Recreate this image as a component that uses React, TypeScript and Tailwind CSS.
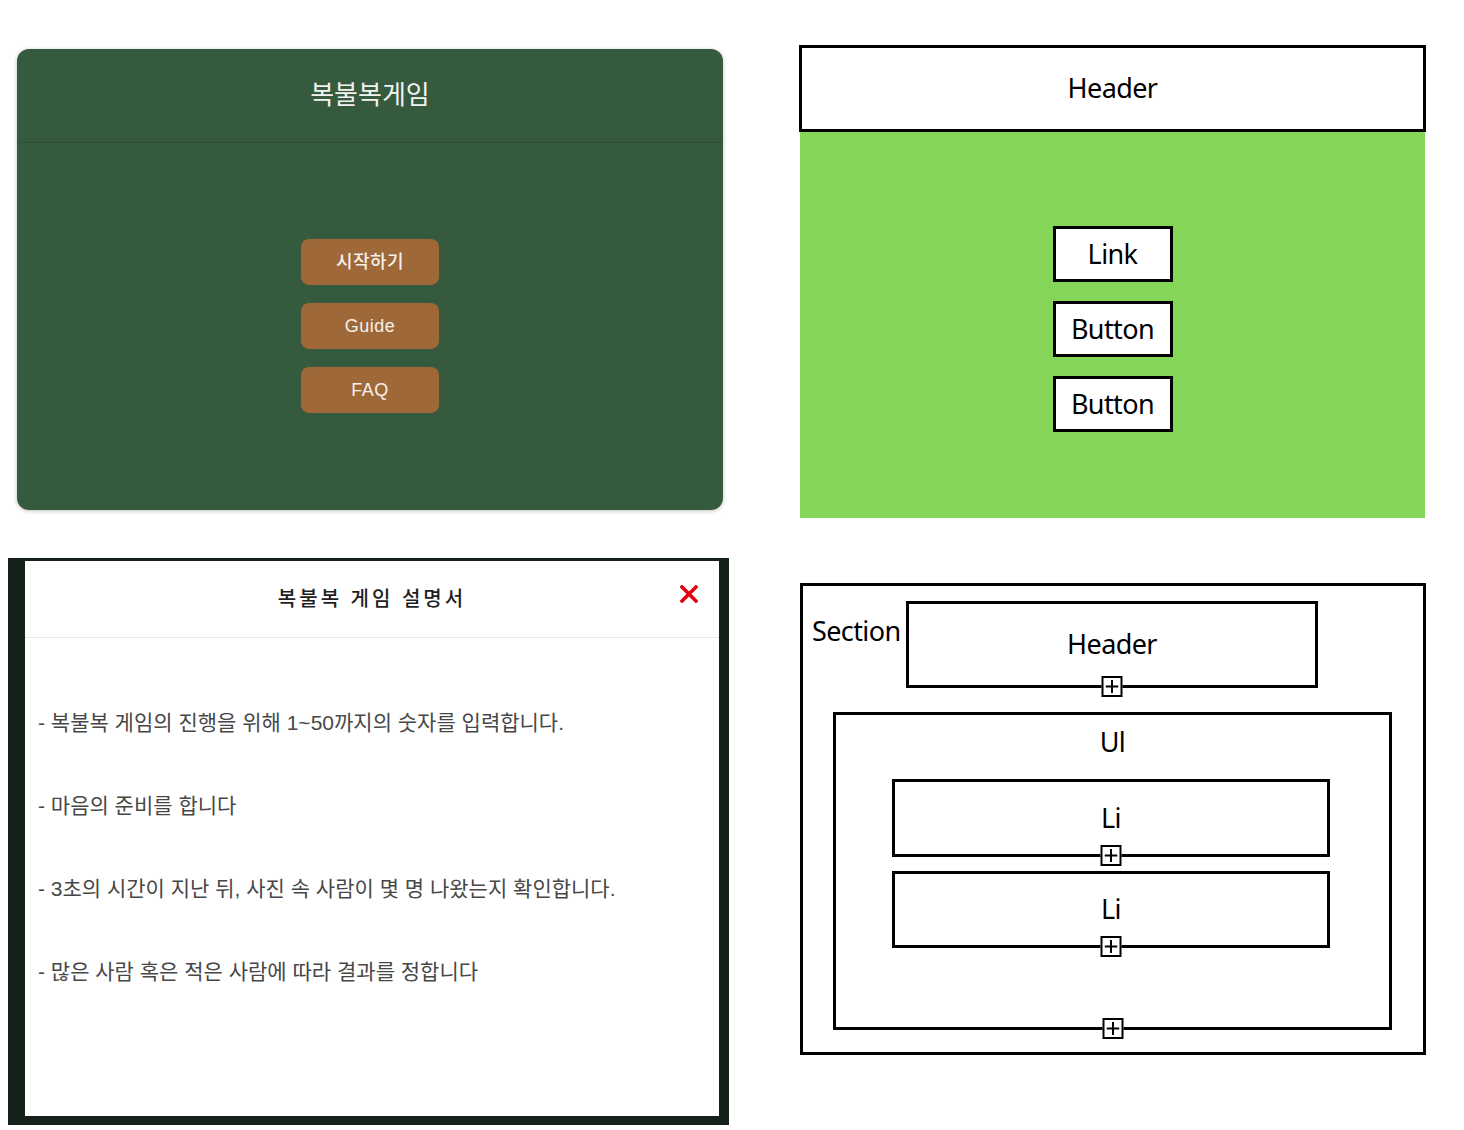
import React from "react";

const latin = { fontFamily: '"Noto Sans", "Liberation Sans", sans-serif' };
const korean = { fontFamily: '"Liberation Sans", "Noto Sans CJK KR", sans-serif' };

const guideLines = [
  "- 복불복 게임의 진행을 위해 1~50까지의 숫자를 입력합니다.",
  "- 마음의 준비를 합니다",
  "- 3초의 시간이 지난 뒤, 사진 속 사람이 몇 명 나왔는지 확인합니다.",
  "- 많은 사람 혹은 적은 사람에 따라 결과를 정합니다",
];

// small "+" handle that sits on the bottom border of a diagram box
function PlusHandle() {
  return (
    <div className="absolute left-1/2 -translate-x-1/2 bottom-[-12px] w-[21px] h-[21px] bg-white border-2 border-black flex items-center justify-center">
      <svg width="13" height="13" viewBox="0 0 13 13">
        <path d="M6.5 0v13M0 6.5h13" stroke="black" strokeWidth="2" />
      </svg>
    </div>
  );
}

function GameCard() {
  return (
    <div className="w-[706px] h-[461px] bg-[#355a3d] rounded-xl shadow-[0_1px_4px_rgba(0,0,0,0.25)] overflow-hidden flex flex-col">
      {/* Header */}
      <div className="h-[94px] border-b border-[#2e5035] flex items-center justify-center">
        <h1 className="text-[26px] text-[#f2f2f2]" style={korean}>복불복게임</h1>
      </div>

      {/* Menu */}
      <div className="flex flex-col items-center gap-[18px] pt-[96px]">
        {["시작하기", "Guide", "FAQ"].map((label) => (
          <button
            key={label}
            className="w-[138px] h-[46px] rounded-lg bg-[#9e6838] text-[18px] font-medium text-[#f5f0ea] tracking-[0.5px]"
            style={korean}
          >
            {label}
          </button>
        ))}
      </div>
    </div>
  );
}

function Wireframe() {
  return (
    <div className="w-[627px]" style={latin}>
      <div className="h-[87px] border-[3px] border-black bg-white flex items-center justify-center">
        <span className="text-[27px] tracking-[-0.6px] text-black">Header</span>
      </div>
      <div className="ml-px w-[625px] h-[386px] bg-[#84d558] flex flex-col items-center pt-[94px] gap-[19px]">
        {["Link", "Button", "Button"].map((label, i) => (
          <div
            key={i}
            className="w-[120px] h-[56px] border-[3px] border-black bg-white flex items-center justify-center"
          >
            <span className="text-[27px] tracking-[-0.6px] text-black">{label}</span>
          </div>
        ))}
      </div>
    </div>
  );
}

function GuideModal() {
  return (
    <div className="w-[721px] h-[567px] bg-[#152219] pl-[17px] pt-[3px] pr-[10px] pb-[9px]">
      <div className="w-full h-full bg-white flex flex-col">
        {/* Title bar */}
        <div className="relative h-[77px] border-b border-[#e6e6e6] flex items-center justify-center">
          <h2 className="text-[20px] font-medium tracking-[3px] text-[#1e1e1e]" style={korean}>
            복불복 게임 설명서
          </h2>
          <button className="absolute right-[21px] top-[24px]">
            <svg width="18" height="18" viewBox="0 0 18 18">
              <path d="M2 2L16 16M16 2L2 16" stroke="#e3000f" strokeWidth="3.6" strokeLinecap="square" />
            </svg>
          </button>
        </div>

        {/* Body */}
        <div className="flex flex-col gap-[55px] pt-[71px] pl-[13px]">
          {guideLines.map((line) => (
            <p key={line} className="text-[21px] leading-[28px] text-[#474747]" style={korean}>
              {line}
            </p>
          ))}
        </div>
      </div>
    </div>
  );
}

function StructureDiagram() {
  return (
    <div className="w-[626px] h-[472px] border-[3px] border-black bg-white pt-[15px]" style={latin}>
      <div className="flex items-start">
        <div className="w-[103px] pl-[9px] mt-[15px] h-[30px] flex items-center">
          <span className="text-[27px] tracking-[-0.6px] text-black">Section</span>
        </div>
        <div className="relative w-[412px] h-[87px] border-[3px] border-black flex items-center justify-center">
          <span className="text-[27px] tracking-[-0.6px] text-black">Header</span>
          <PlusHandle />
        </div>
      </div>

      {/* Ul */}
      <div className="relative mt-[24px] ml-[30px] w-[559px] h-[318px] border-[3px] border-black">
        <div className="mt-[12px] h-[30px] flex items-center justify-center">
          <span className="text-[27px] tracking-[-0.6px] text-black">Ul</span>
        </div>
        <div className="ml-[56px] mt-[22px] flex flex-col gap-[14px]">
          {[78, 77].map((h, i) => (
            <div
              key={i}
              className={`relative w-[438px] border-[3px] border-black flex items-center justify-center ${
                h === 78 ? "h-[78px]" : "h-[77px]"
              }`}
            >
              <span className="text-[27px] tracking-[-0.6px] text-black">Li</span>
              <PlusHandle />
            </div>
          ))}
        </div>
        <PlusHandle />
      </div>
    </div>
  );
}

export default function App() {
  return (
    <div className="w-[1464px] h-[1130px] bg-white overflow-hidden">
      {/* Top row */}
      <div className="flex items-start h-[558px]">
        <div className="w-[799px] pl-[17px] pt-[49px]">
          <GameCard />
        </div>
        <div className="pt-[45px]">
          <Wireframe />
        </div>
      </div>

      {/* Bottom row */}
      <div className="flex items-start">
        <div className="w-[800px] pl-[8px]">
          <GuideModal />
        </div>
        <div className="pt-[25px]">
          <StructureDiagram />
        </div>
      </div>
    </div>
  );
}
